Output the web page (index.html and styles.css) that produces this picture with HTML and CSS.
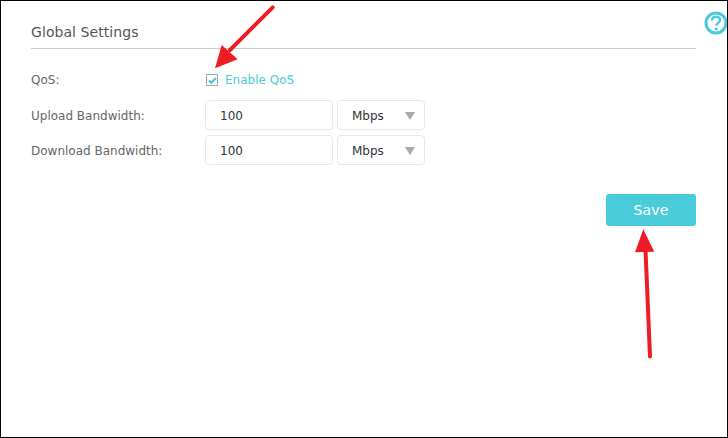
FILE: index.html
```html
<!DOCTYPE html>
<html lang="en">
<head>
<meta charset="utf-8">
<title>Global Settings</title>
<link rel="stylesheet" href="styles.css">
</head>
<body>
<main class="frame">
  <svg class="help" viewBox="0 0 24 24" width="24" height="24" aria-hidden="true">
    <circle cx="12" cy="12" r="10" fill="none" stroke="#4acbd9" stroke-width="3"/>
    <path d="M8 9.6c0-2.4 1.7-3.9 4-3.9s4 1.4 4 3.4c0 1.5-.9 2.3-2.1 3.1-1.1.7-1.7 1.2-1.7 2.6" fill="none" stroke="#4acbd9" stroke-width="2.5"/>
    <circle cx="12.2" cy="18" r="1.6" fill="#4acbd9"/>
  </svg>
  <section class="panel">
    <h2 class="title">Global Settings</h2>
    <div class="row row-qos">
      <span class="label">QoS:</span>
      <label class="check">
        <span class="box">
          <svg viewBox="0 0 10 8" width="9" height="7" aria-hidden="true"><path d="M1 4l2.8 2.6L9 1.2" fill="none" stroke="#4acbd9" stroke-width="2.6"/></svg>
        </span>
        Enable QoS
      </label>
    </div>
    <div class="row row-field">
      <span class="label">Upload Bandwidth:</span>
      <div class="field">100</div>
      <div class="select"><span>Mbps</span><i class="caret"></i></div>
    </div>
    <div class="row row-field">
      <span class="label">Download Bandwidth:</span>
      <div class="field">100</div>
      <div class="select"><span>Mbps</span><i class="caret"></i></div>
    </div>
    <div class="actions"><button class="save" type="button">Save</button></div>
  </section>
  <svg class="arrows" viewBox="0 0 728 438" width="728" height="438" aria-hidden="true">
    <path d="M272.7 7.3L230 50" stroke="#ee1c25" stroke-width="4" stroke-linecap="round" fill="none"/>
    <path d="M215 68.3L221.7 45L237.7 59.3Z" fill="#ee1c25"/>
    <path d="M645.5 250L650 356.5" stroke="#ee1c25" stroke-width="4" stroke-linecap="round" fill="none"/>
    <path d="M643.3 229.3L635 252.3L654.3 251.7Z" fill="#ee1c25"/>
  </svg>
</main>
</body>
</html>
```
FILE: styles.css
```css
* { box-sizing: border-box; }
html, body { margin: 0; padding: 0; }
body { background: #fff; font-family: "DejaVu Sans", sans-serif; font-size: 12px; color: #666; }
.frame { position: relative; width: 728px; height: 438px; border: 1px solid #000; overflow: hidden; background: #fff; }
.help { position: absolute; left: 703px; top: 10px; }
.arrows { position: absolute; left: -1px; top: -1px; }
.panel { width: 665px; margin-left: 30px; padding-top: 22px; }
.title { margin: 0; height: 26px; line-height: 19px; font-size: 14px; font-weight: 400; letter-spacing: .07px; color: #555; border-bottom: 1px solid #ccc; }
.row { display: flex; align-items: center; }
.label { width: 174px; flex: none; }
.row-qos { height: 30px; margin-top: 16px; }
.check { display: flex; align-items: center; color: #4acbd9; gap: 7px; margin-left: 1px; }
.box { width: 12px; height: 12px; border: 1px solid #aaa; display: flex; align-items: center; justify-content: center; }
.row-field { height: 30px; margin-bottom: 5px; }
.row-qos + .row-field { margin-top: 5px; }
.row-field .label { padding-top: 1px; }
.field, .select { height: 30px; border: 1px solid #e8e8e8; border-radius: 4px; color: #333; display: flex; align-items: center; padding-top: 1px; }
.field { width: 128px; padding-left: 14px; margin-right: 4px; }
.select { width: 88px; padding-left: 14px; padding-right: 9px; justify-content: space-between; }
.caret { width: 0; height: 0; border-left: 5px solid transparent; border-right: 5px solid transparent; border-top: 8px solid #aaa; }
.actions { display: flex; justify-content: flex-end; margin-top: 29px; }
.save { width: 90px; height: 32px; border: 0; border-radius: 3px; background: #4acbd9; color: #fff; font: 14px "DejaVu Sans", sans-serif; letter-spacing: .2px; padding: 0; }
```
